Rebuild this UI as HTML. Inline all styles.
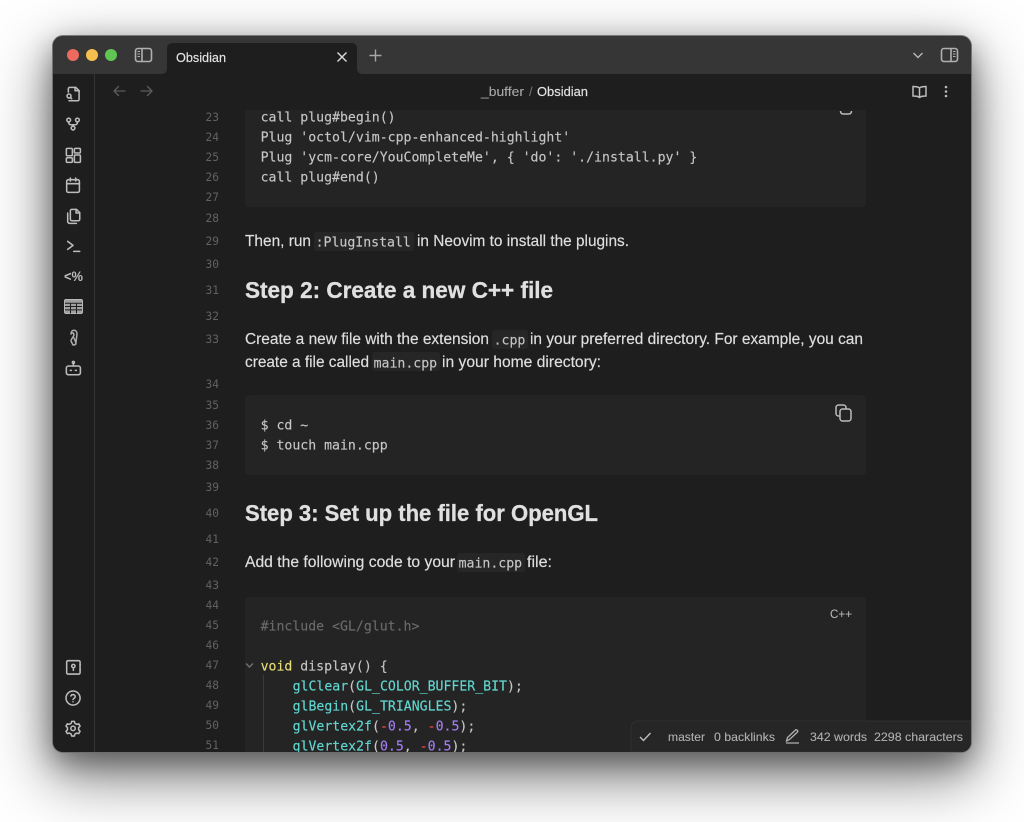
<!DOCTYPE html>
<html lang="en"><head><meta charset="utf-8"><title>Obsidian</title>
<style>
html,body{margin:0;padding:0;background:#fff;width:1024px;height:822px;overflow:hidden}
#win{position:absolute;left:53px;top:36px;width:918px;height:716px;border-radius:10px;background:#1e1e1e;box-shadow:0 0 0 1px rgba(110,110,110,.9),0 10px 28px rgba(0,0,0,.38),0 22px 60px 4px rgba(0,0,0,.5)}
svg{position:absolute;left:0;top:0}
.s{font-family:"Liberation Sans",sans-serif;font-size:15.5px;fill:#dedede;stroke:#dedede;stroke-width:.18px}
.h{font-family:"Liberation Sans",sans-serif;font-size:23.5px;font-weight:700;fill:#e0e0e0;stroke:#e0e0e0;stroke-width:.3px}
.m{font-family:"DejaVu Sans Mono","Liberation Mono",monospace;font-size:13.2px;fill:#c6c6c6;stroke:#c6c6c6;stroke-width:.14px;transform:translate(-.4px,.5px)}
.g{font-family:"DejaVu Sans Mono","Liberation Mono",monospace;font-size:11.2px;fill:#626262;text-anchor:end}
.u{font-family:"Liberation Sans",sans-serif;font-size:12px;fill:#b0b0b0;stroke:#b0b0b0;stroke-width:.1px}
.i{fill:none;stroke:#bcbcbc;stroke-width:2.300;stroke-linecap:round;stroke-linejoin:round}
.y{fill:#e6dc78;stroke:#e6dc78}.t{fill:#62d6d0;stroke:#62d6d0}.n{fill:#a37ef5;stroke:#a37ef5}.r{fill:#e5484d;stroke:#e5484d}.c{fill:#6a6a6a;stroke:#6a6a6a}
</style></head><body>
<div id="win"></div>
<svg width="1024" height="822" viewBox="0 0 1024 822">
<defs><clipPath id="w"><rect x="53" y="36" width="918" height="716" rx="10"/></clipPath>
<clipPath id="ed"><rect x="95" y="110" width="876" height="642"/></clipPath></defs>
<g clip-path="url(#w)">
<rect x="53" y="36" width="918" height="38" fill="#363636"/>
<path d="M161 74q6 0 6-6V49q0-6 6-6h178q6 0 6 6v19q0 6 6 6z" fill="#1e1e1e"/>
<rect x="94" y="74" width="1" height="678" fill="#363636"/>
<circle cx="73" cy="55" r="6" fill="#ed6a5e"/><circle cx="92" cy="55" r="6" fill="#f5bf4f"/><circle cx="111" cy="55" r="6" fill="#61c554"/>

<g fill="none" stroke="#b0b0b0" stroke-width="1.600">
<rect x="135.500" y="48.500" width="16" height="13" rx="2.500"/><path d="M142 48.500v13"/>
<path d="M137.500 51.500h2.500M137.500 54h2.500M137.500 56.500h2.500" stroke-width="1.100"/>
<rect x="941.500" y="48.500" width="16" height="13" rx="2.500"/><path d="M951 48.500v13"/>
<path d="M953 51.500h2.500M953 54h2.500M953 56.500h2.500" stroke-width="1.100"/>
<path d="M913.500 53l4.500 4.500 4.500-4.500" stroke="#b8b8b8" stroke-width="1.400"/>
<path d="M337.500 52.500l9 9M346.500 52.500l-9 9" stroke="#dcdcdc" stroke-width="1.400"/>
<path d="M375.500 49.500v12M369.500 55.500h12" stroke="#a8a8a8" stroke-width="1.400"/>
<path d="M114 91h11M118.500 86.500L114 91l4.500 4.500M152 91h-11M147.500 86.500L152 91l-4.500 4.500" stroke="#5c5c5c" stroke-width="1.300" stroke-linecap="round" stroke-linejoin="round"/>
<path d="M919.500 88c-1.500-1.500-4-1.500-6.500-1.500v9.500c2.500 0 5 0 6.500 1.500 1.500-1.500 4-1.500 6.500-1.500v-9.500c-2.500 0-5 0-6.500 1.500zM919.500 88v10" stroke="#bcbcbc" stroke-width="1.500"/>
</g>
<g fill="#b8b8b8"><circle cx="946" cy="87" r="1.300"/><circle cx="946" cy="91.500" r="1.300"/><circle cx="946" cy="96" r="1.300"/></g>

<text x="176" y="62" font-family="Liberation Sans,sans-serif" font-size="13" fill="#e4e4e4" stroke="#e4e4e4" stroke-width=".15" textLength="50" lengthAdjust="spacingAndGlyphs">Obsidian</text>
<text x="481" y="96" font-family="Liberation Sans,sans-serif" font-size="12.800" fill="#a8a8a8" stroke="#a8a8a8" stroke-width=".1" textLength="43" lengthAdjust="spacingAndGlyphs">_buffer</text>
<text x="529" y="96" font-family="Liberation Sans,sans-serif" font-size="12.800" fill="#777">/</text>
<text x="537" y="96" font-family="Liberation Sans,sans-serif" font-size="12.800" fill="#e4e4e4" stroke="#e4e4e4" stroke-width=".15" textLength="51" lengthAdjust="spacingAndGlyphs">Obsidian</text>

<!-- ribbon icons -->
<g transform="translate(65 86) scale(.67)" class="i"><path d="M5 9V4a2 2 0 0 1 2-2h9l5 5v13a2 2 0 0 1-2 2H6"/><path d="M15 2v5h6"/><circle cx="6" cy="15" r="3"/><path d="M8.200 17.200L10 19"/></g>
<g transform="translate(65 116) scale(.67)" class="i"><circle cx="5.500" cy="6" r="2.800"/><circle cx="18.500" cy="6" r="2.800"/><circle cx="12" cy="18" r="2.800"/><path d="M5.500 9v1a3 3 0 0 0 3 3h7a3 3 0 0 0 3-3V9M12 13v2"/></g>
<g transform="translate(65 147) scale(.67)" class="i"><rect x="2" y="2" width="9" height="11" rx="1.500"/><rect x="14" y="2" width="9" height="7" rx="1.500"/><rect x="14" y="12" width="9" height="11" rx="1.500"/><rect x="2" y="16" width="9" height="7" rx="1.500"/></g>
<g transform="translate(65 177) scale(.67)" class="i"><rect x="2.500" y="4" width="19" height="19" rx="2.500"/><path d="M2.500 10h19M8 1.500V6M16 1.500V6"/></g>
<g transform="translate(65 208) scale(.67)" class="i"><path d="M8 17V4a2 2 0 0 1 2-2h7l5 5v10a2 2 0 0 1-2 2H10a2 2 0 0 1-2-2z"/><path d="M16.500 2v5.500H22"/><path d="M4 7.500V20a3 3 0 0 0 3 3h10"/></g>
<g transform="translate(65 238) scale(.67)" class="i"><path d="M4 5l8 6-8 6M13 20h9"/></g>
<text x="73.500" y="281" text-anchor="middle" font-family="Liberation Sans,sans-serif" font-size="13.500" font-weight="700" fill="#bcbcbc" textLength="19" lengthAdjust="spacingAndGlyphs">&lt;%</text>
<g transform="translate(64 299)"><rect x=".5" y=".5" width="18" height="14" rx="1.500" fill="#a0a0a0" stroke="#b8b8b8"/><path d="M1 4.200h17M1 7.500h17M1 10.900h17M6.500 4v10.500M12.500 4v10.500" stroke="#1e1e1e" stroke-width="1" fill="none"/></g>
<g transform="translate(68 329)" fill="none" stroke="#acacac" stroke-width="1.500" stroke-linecap="round"><path d="M3 5c0-5 6-5 6 0l-1 8c0 3-2 3-3 3l-2-4c0-2 2-3 3-6 0-2-2-3-3-1M6 9l2 5c0 2-3 3-4 0"/></g>
<g transform="translate(65 360) scale(.67)" class="i"><rect x="2" y="9" width="21" height="13" rx="3"/><path d="M12.500 5v4"/><circle cx="12.500" cy="3.500" r="1.500"/><path d="M8 15.500h1.500M15.500 15.500H17"/></g>
<g transform="translate(65 659) scale(.67)" class="i"><rect x="2.500" y="2.500" width="20" height="20" rx="2"/><circle cx="12.500" cy="10.500" r="2.500"/><path d="M12.500 13v4M22.500 8v1M22.500 16v1"/></g>
<g transform="translate(65 690) scale(.67)" class="i"><circle cx="12" cy="12" r="10.500"/><path d="M8.800 9a3.300 3.300 0 0 1 6.400 1c0 2.200-3.200 2.800-3.200 4.200"/><path d="M12 17.500h.01"/></g>
<g transform="translate(65 720) scale(.67)" class="i"><path d="M10 2h4l.8 3 2.700 1.500 3-.8 2 3.500-2.200 2.200v3.200l2.200 2.200-2 3.500-3-.8-2.700 1.500-.8 3h-4l-.8-3-2.700-1.500-3 .8-2-3.500 2.200-2.200v-3.200L1.500 9.200l2-3.500 3 .8L9.200 5z"/><circle cx="12" cy="12.500" r="3.300"/></g>

<g clip-path="url(#ed)">
<rect x="245" y="90" width="621" height="117" rx="4" fill="#242424"/>
<rect x="245" y="395" width="621" height="80" rx="4" fill="#242424"/>
<rect x="245" y="597" width="621" height="190" rx="4" fill="#242424"/>
<rect x="314" y="232" width="100" height="19" rx="3" fill="#262626"/>
<rect x="492" y="330" width="36" height="19" rx="3" fill="#262626"/>
<rect x="372" y="352" width="68" height="19" rx="3" fill="#262626"/>
<rect x="457" y="553" width="68" height="19" rx="3" fill="#262626"/>
<rect x="263" y="675" width="1" height="80" fill="#3a3a3a"/>

<g class="g">
<text x="219" y="121" class="g">23</text><text x="219" y="141" class="g">24</text><text x="219" y="161" class="g">25</text><text x="219" y="181" class="g">26</text><text x="219" y="201" class="g">27</text><text x="219" y="222" class="g">28</text><text x="219" y="245" class="g">29</text><text x="219" y="268" class="g">30</text><text x="219" y="294" class="g">31</text><text x="219" y="320" class="g">32</text><text x="219" y="343" class="g">33</text><text x="219" y="388" class="g">34</text><text x="219" y="409" class="g">35</text><text x="219" y="429" class="g">36</text><text x="219" y="449" class="g">37</text><text x="219" y="469" class="g">38</text><text x="219" y="491" class="g">39</text><text x="219" y="517" class="g">40</text><text x="219" y="543" class="g">41</text><text x="219" y="566" class="g">42</text><text x="219" y="589" class="g">43</text><text x="219" y="609" class="g">44</text><text x="219" y="629" class="g">45</text><text x="219" y="649" class="g">46</text><text x="219" y="669" class="g">47</text><text x="219" y="689" class="g">48</text><text x="219" y="709" class="g">49</text><text x="219" y="729" class="g">50</text><text x="219" y="749" class="g">51</text>
</g>

<text x="261" y="121" class="m">call plug#begin()</text>
<text x="261" y="141" class="m">Plug 'octol/vim-cpp-enhanced-highlight'</text>
<text x="261" y="161" class="m">Plug 'ycm-core/YouCompleteMe', { 'do': './install.py' }</text>
<text x="261" y="181" class="m">call plug#end()</text>

<text x="245" y="246" class="s" textLength="66" lengthAdjust="spacingAndGlyphs">Then, run</text>
<text x="316" y="246" class="m">:PlugInstall</text>
<text x="417" y="246" class="s" textLength="212" lengthAdjust="spacingAndGlyphs">in Neovim to install the plugins.</text>

<text x="245" y="298" class="h" textLength="308" lengthAdjust="spacingAndGlyphs">Step 2: Create a new C++ file</text>

<text x="245" y="344" class="s" textLength="244" lengthAdjust="spacingAndGlyphs">Create a new file with the extension</text>
<text x="494" y="344" class="m">.cpp</text>
<text x="530" y="344" class="s" textLength="333" lengthAdjust="spacingAndGlyphs">in your preferred directory. For example, you can</text>
<text x="245" y="367" class="s" textLength="124" lengthAdjust="spacingAndGlyphs">create a file called</text>
<text x="374" y="367" class="m">main.cpp</text>
<text x="442" y="367" class="s" textLength="159" lengthAdjust="spacingAndGlyphs">in your home directory:</text>

<text x="261" y="429" class="m">$ cd ~</text>
<text x="261" y="449" class="m">$ touch main.cpp</text>

<text x="245" y="521" class="h" textLength="353" lengthAdjust="spacingAndGlyphs">Step 3: Set up the file for OpenGL</text>

<text x="245" y="567" class="s" textLength="210" lengthAdjust="spacingAndGlyphs">Add the following code to your</text>
<text x="459" y="567" class="m">main.cpp</text>
<text x="527" y="567" class="s" textLength="25" lengthAdjust="spacingAndGlyphs">file:</text>

<text x="830" y="618" font-family="Liberation Sans,sans-serif" font-size="12" fill="#bcbcbc" textLength="22" lengthAdjust="spacingAndGlyphs">C++</text>

<text x="261" y="630" class="m c">#include &lt;GL/glut.h&gt;</text>
<text x="261" y="670" class="m"><tspan class="y">void</tspan> display() {</text>
<text x="293" y="690" class="m"><tspan class="t">glClear</tspan>(<tspan class="t">GL_COLOR_BUFFER_BIT</tspan>);</text>
<text x="293" y="710" class="m"><tspan class="t">glBegin</tspan>(<tspan class="t">GL_TRIANGLES</tspan>);</text>
<text x="293" y="730" class="m"><tspan class="t">glVertex2f</tspan>(<tspan class="r">-</tspan><tspan class="n">0.5</tspan>, <tspan class="r">-</tspan><tspan class="n">0.5</tspan>);</text>
<text x="293" y="750" class="m"><tspan class="t">glVertex2f</tspan>(<tspan class="n">0.5</tspan>, <tspan class="r">-</tspan><tspan class="n">0.5</tspan>);</text>

<path d="M246 663.500l3.500 3.500 3.500-3.500" fill="none" stroke="#707070" stroke-width="1.400"/>

<g fill="none" stroke="#bcbcbc" stroke-width="1.500">
<rect x="836" y="405" width="10" height="11" rx="2.500"/><rect x="840" y="409" width="11" height="12" rx="2.500" fill="#242424"/>
<path d="M840.500 111c0 2 1 3 3 3h5c2 0 3-1 3-3"/>
</g>
</g>

<!-- status bar -->
<path d="M631 752v-23q0-8 8-8h332v31z" fill="#262626" stroke="#303030"/>
<path d="M640 737l3.500 3.500 7-7.500" fill="none" stroke="#bcbcbc" stroke-width="1.400"/>
<text x="668" y="741" class="u" textLength="37" lengthAdjust="spacingAndGlyphs">master</text>
<text x="714" y="741" class="u" textLength="61" lengthAdjust="spacingAndGlyphs">0 backlinks</text>
<path d="M786.500 741l1-3.500 8-7.500c1-1 3 1 2 2l-8 7.500zM786 743h13" fill="none" stroke="#b0b0b0" stroke-width="1.300"/>
<text x="810" y="741" class="u" textLength="57" lengthAdjust="spacingAndGlyphs">342 words</text>
<text x="874" y="741" class="u" textLength="89" lengthAdjust="spacingAndGlyphs">2298 characters</text>
</g>
</svg>
</body></html>
